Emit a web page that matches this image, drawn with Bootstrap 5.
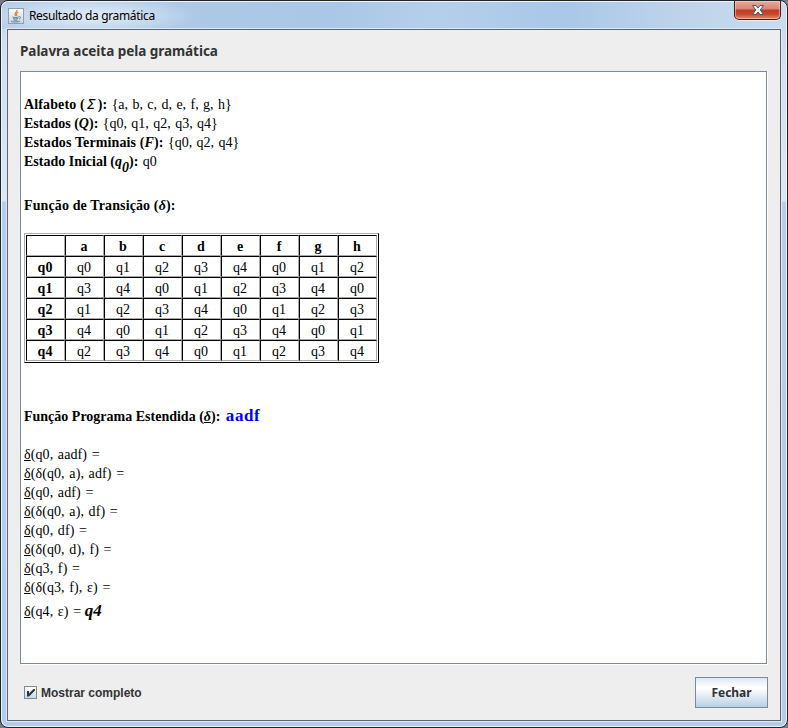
<!DOCTYPE html>
<html lang="pt-BR">
<head>
<meta charset="utf-8">
<title>Resultado da gramática</title>
<link href="https://cdn.jsdelivr.net/npm/bootstrap@5.3.0/dist/css/bootstrap.min.css" rel="stylesheet">
<style>
html,body{height:100%;overflow:hidden}
body{background:#777b80;color:#000}
.win{width:788px;height:728px;border:1px solid #1d242e;border-radius:8px;padding:0 6px 6px;
 background:linear-gradient(180deg,#d5e3f3 0,#c3d8ef 14px,transparent 40px),linear-gradient(180deg,#cbdcf0 0,#dce7f5 200px,#b3cfed 201px,#b1cdeb 100%);
 box-shadow:inset 0 0 0 1px #eef5fc}
.titlebar{height:27px;margin:1px -5px 0;padding:0 0 0 6px;border-radius:6px 6px 0 0;
 background:radial-gradient(ellipse 105px 20px at 90px 14px,rgba(235,243,251,.85),rgba(235,243,251,0)),linear-gradient(90deg,#b9cfe8 0,#adc9e6 24%,#a9c7e6 42%,#b5cfea 55%,#a8c8e8 72%,#bed3e9 86%,#c9dcf1 100%)}
.titlebar span{font:12px/16px "Noto Sans","Open Sans",sans-serif;letter-spacing:-.34px;margin-left:5px}
.closebox{width:47px;height:19px;margin-right:5px;margin-top:-1px;border:1px solid #431a1c;border-top:0;border-radius:0 0 5px 5px;
 background:linear-gradient(180deg,#e9a99b 0,#d98573 8px,#bd3d27 9px,#c6462d 13px,#e28c69 18px);box-shadow:inset 0 0 0 1px rgba(255,220,210,.5),0 1px 0 #e6effa}
.pane{height:692px;border:1px solid #5a6570;background:#eee;padding:0 12px;box-shadow:0 0 0 1px #dfeaf6}
.pane h1{font:bold 13.5px/20px "Noto Sans","Open Sans",sans-serif;letter-spacing:-.04px;color:#333;margin:11px 0 10px}
.doc{height:593px;margin-right:1px;border:1px solid #7a8a99;background:#fff;padding:23px 3px 0;box-shadow:1px 1px 0 #fff;
 font-family:"Liberation Serif","Times New Roman",serif;font-size:14px}
.doc p{margin:0;height:19px;line-height:19px;white-space:nowrap;word-spacing:.9px}
.doc p b{word-spacing:0}
.doc p.gap-init{margin-top:25px}
.doc p.gap-calc{margin-top:19px;}
.doc p.gap-last{margin-top:5px}
.calc p{word-spacing:1px;letter-spacing:.1px}
.wide{letter-spacing:.12px}
.sigma{font:italic 14px/1 "DejaVu Sans",sans-serif;margin:0 2px 0 2px}
.doc sub{font-size:14px;bottom:-6px;line-height:0}
.trans{border:1px solid;border-color:#aaa #000 #000 #aaa;border-collapse:separate;border-spacing:0;padding:1px;table-layout:fixed;width:355px;margin:18px 0 44px}
.trans th,.trans td{border:1px solid;border-color:#000 #aaa #aaa #000;height:21px;padding:2px 1px 0 0;line-height:17px;text-align:center}
.word{color:#00f;font-size:17px;letter-spacing:.6px;line-height:0;margin-left:2px}
.fin{font-size:17px;line-height:0;letter-spacing:0;margin-left:-1px}
.foot{font:bold 12px/16px "Liberation Sans",Arial,sans-serif;color:#333;margin-top:13px}
.tick{width:13px;height:13px;border:1px solid #7a8a99;background:linear-gradient(#fff,#c5d8e9);margin:0 4px}
.fechar{width:73px;height:31px;border:1px solid #7a8a99;border-radius:0;padding:0;background:linear-gradient(180deg,#dde8f3 0,#fff 33%,#fff 36%,#b8cfe5 100%);font:bold 12px/16px "Noto Sans","Open Sans",sans-serif;letter-spacing:-.05px;color:#333}
</style>
<script src="https://cdn.jsdelivr.net/npm/bootstrap@5.3.0/dist/js/bootstrap.bundle.min.js"></script>
</head>
<body>
<div class="win">
 <header class="titlebar d-flex align-items-center justify-content-between">
  <div class="d-flex align-items-center">
   <svg width="16" height="16" viewBox="0 0 16 16"><defs><linearGradient id="g" x2="0" y2="1"><stop stop-color="#fff"/><stop offset="1" stop-color="#c8d3df"/></linearGradient></defs><rect x=".5" y=".5" width="15" height="15" fill="url(#g)" stroke="#8c9fb3"/><g fill="none"><path d="M9 1.8C9.5 4 5.2 5 7.8 8M10.5 4C8 5 8.2 6 9 8" stroke="#e8832b" stroke-width="1.2"/><path d="M4.5 8.7C5 10 10 9.6 10.8 8.8M5 10.5q2.5 1 5 0M5.5 12q2 .8 4 0M11 8.8c2.3-.3 1.8 1.7 0 2.2M3 12.8c-.5 1.5 8 1.5 9 .2" stroke="#5580a5"/></g></svg>
   <span>Resultado da gramática</span>
  </div>
  <div class="closebox d-flex align-items-center justify-content-center align-self-start">
   <svg width="14" height="12" viewBox="0 0 14 12"><path d="M1.500 1.500H5L7 4l2-2.500h3.500L9.300 6l3.200 4.500H9L7 8l-2 2.500H1.500L4.700 6z" fill="#f4f4f4" stroke="#4f5268"/></svg>
  </div>
 </header>
 <main class="pane d-flex flex-column">
  <h1>Palavra aceita pela gramática</h1>
  <section class="doc">
   <p><b class="wide">Alfabeto (<span class="sigma">Σ</span>):</b> {a, b, c, d, e, f, g, h}</p>
   <p><b>Estados (<i>Q</i>):</b> {q0, q1, q2, q3, q4}</p>
   <p><b class="wide">Estados Terminais (<i>F</i>):</b> {q0, q2, q4}</p>
   <p><b>Estado Inicial (<i>q<sub>0</sub></i>):</b> q0</p>
   <p class="gap-init"><b class="wide">Função de Transição (<i>δ</i>):</b></p>
   <table class="trans">
    <tr><th></th><th>a</th><th>b</th><th>c</th><th>d</th><th>e</th><th>f</th><th>g</th><th>h</th></tr>
    <tr><th>q0</th><td>q0</td><td>q1</td><td>q2</td><td>q3</td><td>q4</td><td>q0</td><td>q1</td><td>q2</td></tr>
    <tr><th>q1</th><td>q3</td><td>q4</td><td>q0</td><td>q1</td><td>q2</td><td>q3</td><td>q4</td><td>q0</td></tr>
    <tr><th>q2</th><td>q1</td><td>q2</td><td>q3</td><td>q4</td><td>q0</td><td>q1</td><td>q2</td><td>q3</td></tr>
    <tr><th>q3</th><td>q4</td><td>q0</td><td>q1</td><td>q2</td><td>q3</td><td>q4</td><td>q0</td><td>q1</td></tr>
    <tr><th>q4</th><td>q2</td><td>q3</td><td>q4</td><td>q0</td><td>q1</td><td>q2</td><td>q3</td><td>q4</td></tr>
   </table>
   <p><b>Função Programa Estendida (<u><i>δ</i></u>): <span class="word">aadf</span></b></p>
   <div class="calc">
    <p class="gap-calc"><u>δ</u>(q0, aadf) =</p>
    <p><u>δ</u>(δ(q0, a), adf) =</p>
    <p><u>δ</u>(q0, adf) =</p>
    <p><u>δ</u>(δ(q0, a), df) =</p>
    <p><u>δ</u>(q0, df) =</p>
    <p><u>δ</u>(δ(q0, d), f) =</p>
    <p><u>δ</u>(q3, f) =</p>
    <p><u>δ</u>(δ(q3, f), ε) =</p>
    <p class="gap-last"><u>δ</u>(q4, ε) = <b class="fin"><i>q4</i></b></p>
   </div>
  </section>
  <footer class="foot d-flex align-items-center justify-content-between">
   <label class="d-flex align-items-center"><span class="tick d-flex"><svg width="11" height="11" viewBox="0 0 11 11"><path d="M2 4h2v2.500L8.500 2H10v1.500L4 9.500H2z" fill="#333"/></svg></span>Mostrar completo</label>
   <button class="btn fechar" type="button">Fechar</button>
  </footer>
 </main>
</div>
</body>
</html>
